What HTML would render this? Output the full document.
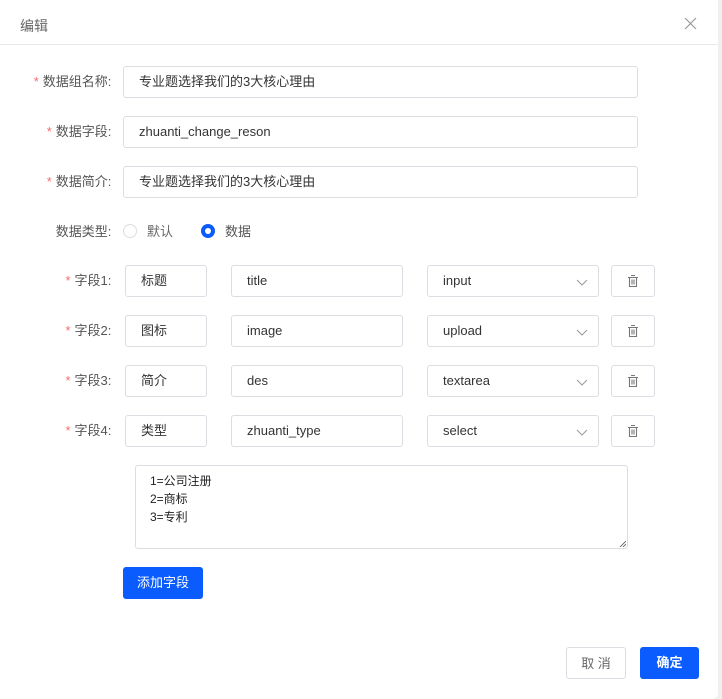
<!DOCTYPE html>
<html><head><meta charset="utf-8"><style>
*{box-sizing:border-box;margin:0;padding:0}
body{width:722px;height:699px;background:#f0f0f0;font-family:"Liberation Sans","Noto Sans CJK SC",sans-serif;font-size:13px;color:#333;position:relative;overflow:hidden}
.dlg{position:absolute;left:0;top:0;width:718px;height:699px;background:#fff;border-radius:0 0 6px 0}
.abs{position:absolute}
.hd{position:absolute;left:0;top:0;width:718px;height:45px;border-bottom:1px solid #e8e8ed}
.box{position:absolute;border:1px solid #dcdde3;border-radius:3px;height:32px;line-height:30px;padding-left:15px;color:#333}
.lbl{position:absolute;text-align:right;color:#555;line-height:32px}
.req{color:#f56c6c;margin-right:4px}
.sel svg{position:absolute;right:10px;top:10px}
.del svg{position:absolute;left:15px;top:8px}
.btn{position:absolute;border-radius:3px;text-align:center;line-height:31px;height:32px}
</style></head><body>
<div class="dlg">
<div class="hd"><span class="abs" style="left:20px;top:16px;font-size:14px;color:#666">编辑</span>
<svg class="abs" style="left:684px;top:17px" width="13" height="13" viewBox="0 0 13 13"><path d="M1 1L12 12M12 1L1 12" stroke="#999" stroke-width="1.2"/></svg></div>

<div class="lbl" style="left:20px;top:66px;width:95px"><span class="req">*</span>数据组名称:&nbsp;</div>
<div class="box" style="left:123px;top:66px;width:515px">专业题选择我们的3大核心理由</div>
<div class="lbl" style="left:20px;top:116px;width:95px"><span class="req">*</span>数据字段:&nbsp;</div>
<div class="box" style="left:123px;top:116px;width:515px">zhuanti_change_reson</div>
<div class="lbl" style="left:20px;top:166px;width:95px"><span class="req">*</span>数据简介:&nbsp;</div>
<div class="box" style="left:123px;top:166px;width:515px">专业题选择我们的3大核心理由</div>

<div class="lbl" style="left:20px;top:216px;width:95px">数据类型:&nbsp;</div>
<div class="abs" style="left:123px;top:224px;width:14px;height:14px;border:1px solid #dcdde3;border-radius:50%"></div>
<div class="abs" style="left:147px;top:216px;line-height:32px;color:#666">默认</div>
<div class="abs" style="left:201px;top:224px;width:14px;height:14px;background:#0a5cff;border-radius:50%"><div class="abs" style="left:4px;top:4px;width:6px;height:6px;background:#fff;border-radius:50%"></div></div>
<div class="abs" style="left:225px;top:216px;line-height:32px;color:#555">数据</div>

<div class="lbl" style="left:20px;top:265px;width:95px"><span class="req">*</span>字段1:&nbsp;</div>
<div class="box" style="left:125px;top:265px;width:82px">标题</div>
<div class="box" style="left:231px;top:265px;width:172px">title</div>
<div class="box sel" style="left:427px;top:265px;width:172px">input<svg width="12" height="12" viewBox="0 0 12 12"><path d="M1 4L6 9L11 4" fill="none" stroke="#999" stroke-width="1"/></svg></div>
<div class="box del" style="left:611px;top:265px;width:44px"><svg width="12" height="14" viewBox="0 0 12 14"><path d="M4 1.5h4M1 3.5h10M2.5 3.5v9h7v-9M5 5.5v5M7 5.5v5" fill="none" stroke="#777" stroke-width="1.1"/></svg></div>

<div class="lbl" style="left:20px;top:315px;width:95px"><span class="req">*</span>字段2:&nbsp;</div>
<div class="box" style="left:125px;top:315px;width:82px">图标</div>
<div class="box" style="left:231px;top:315px;width:172px">image</div>
<div class="box sel" style="left:427px;top:315px;width:172px">upload<svg width="12" height="12" viewBox="0 0 12 12"><path d="M1 4L6 9L11 4" fill="none" stroke="#999" stroke-width="1"/></svg></div>
<div class="box del" style="left:611px;top:315px;width:44px"><svg width="12" height="14" viewBox="0 0 12 14"><path d="M4 1.5h4M1 3.5h10M2.5 3.5v9h7v-9M5 5.5v5M7 5.5v5" fill="none" stroke="#777" stroke-width="1.1"/></svg></div>

<div class="lbl" style="left:20px;top:365px;width:95px"><span class="req">*</span>字段3:&nbsp;</div>
<div class="box" style="left:125px;top:365px;width:82px">简介</div>
<div class="box" style="left:231px;top:365px;width:172px">des</div>
<div class="box sel" style="left:427px;top:365px;width:172px">textarea<svg width="12" height="12" viewBox="0 0 12 12"><path d="M1 4L6 9L11 4" fill="none" stroke="#999" stroke-width="1"/></svg></div>
<div class="box del" style="left:611px;top:365px;width:44px"><svg width="12" height="14" viewBox="0 0 12 14"><path d="M4 1.5h4M1 3.5h10M2.5 3.5v9h7v-9M5 5.5v5M7 5.5v5" fill="none" stroke="#777" stroke-width="1.1"/></svg></div>

<div class="lbl" style="left:20px;top:415px;width:95px"><span class="req">*</span>字段4:&nbsp;</div>
<div class="box" style="left:125px;top:415px;width:82px">类型</div>
<div class="box" style="left:231px;top:415px;width:172px">zhuanti_type</div>
<div class="box sel" style="left:427px;top:415px;width:172px">select<svg width="12" height="12" viewBox="0 0 12 12"><path d="M1 4L6 9L11 4" fill="none" stroke="#999" stroke-width="1"/></svg></div>
<div class="box del" style="left:611px;top:415px;width:44px"><svg width="12" height="14" viewBox="0 0 12 14"><path d="M4 1.5h4M1 3.5h10M2.5 3.5v9h7v-9M5 5.5v5M7 5.5v5" fill="none" stroke="#777" stroke-width="1.1"/></svg></div>

<div class="abs" style="left:135px;top:465px;width:493px;height:84px;border:1px solid #dcdde3;border-radius:3px;padding:6px 0 0 14px;font-size:12px;line-height:18px;color:#222">1=公司注册<br>2=商标<br>3=专利
<svg class="abs" style="right:1px;bottom:1px" width="7" height="7" viewBox="0 0 7 7"><path d="M1 7L7 1M4 7L7 4" stroke="#555" stroke-width="0.8"/></svg></div>

<div class="btn" style="left:123px;top:567px;width:80px;background:#0a5cff;color:#fff">添加字段</div>
<div class="btn" style="left:566px;top:647px;width:60px;border:1px solid #dcdde3;color:#666">取 消</div>
<div class="btn" style="left:640px;top:647px;width:59px;background:#0a5cff;color:#fff;font-weight:bold">确定</div>
</div>
</body></html>
